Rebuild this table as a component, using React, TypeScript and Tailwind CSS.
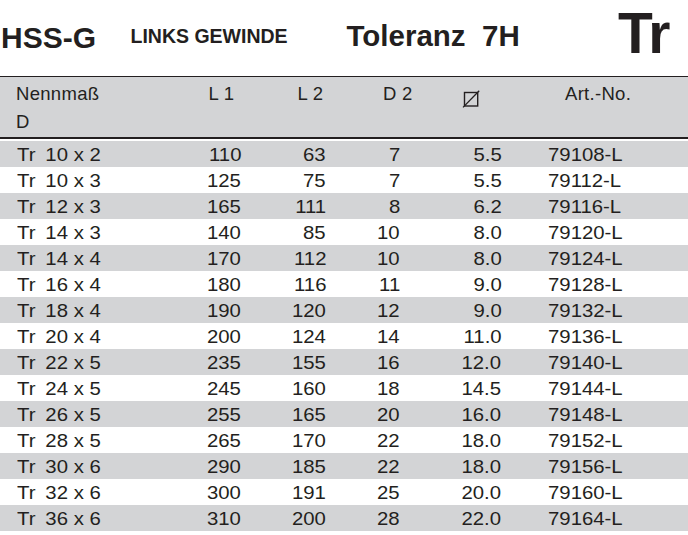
import React from "react";

const rows: [string, string, string, string, string, string][] = [
  ["10 x 2", "110", "63", "7", "5.5", "79108-L"],
  ["10 x 3", "125", "75", "7", "5.5", "79112-L"],
  ["12 x 3", "165", "111", "8", "6.2", "79116-L"],
  ["14 x 3", "140", "85", "10", "8.0", "79120-L"],
  ["14 x 4", "170", "112", "10", "8.0", "79124-L"],
  ["16 x 4", "180", "116", "11", "9.0", "79128-L"],
  ["18 x 4", "190", "120", "12", "9.0", "79132-L"],
  ["20 x 4", "200", "124", "14", "11.0", "79136-L"],
  ["22 x 5", "235", "155", "16", "12.0", "79140-L"],
  ["24 x 5", "245", "160", "18", "14.5", "79144-L"],
  ["26 x 5", "255", "165", "20", "16.0", "79148-L"],
  ["28 x 5", "265", "170", "22", "18.0", "79152-L"],
  ["30 x 6", "290", "185", "22", "18.0", "79156-L"],
  ["32 x 6", "300", "191", "25", "20.0", "79160-L"],
  ["36 x 6", "310", "200", "28", "22.0", "79164-L"],
];

function DiameterIcon() {
  return (
    <svg width="18" height="18" viewBox="0 0 18 18" className="mt-[13px]">
      <rect x="2.5" y="2.5" width="13.2" height="13.5" fill="none" stroke="#231f20" strokeWidth="1.4" />
      <line x1="1" y1="17.4" x2="17.2" y2="0.8" stroke="#231f20" strokeWidth="1.3" />
    </svg>
  );
}

function R({ children }: { children: React.ReactNode }) {
  return <span className="inline-block scale-x-[1.1] origin-right">{children}</span>;
}

export default function App() {
  return (
    <div className="w-[688px] h-[535px] bg-white overflow-hidden text-[#231f20] font-['Liberation_Sans',Arial,sans-serif]">
      {/* Title row */}
      <div className="flex h-[76px] font-bold">
        <div className="w-[130.5px] shrink-0 pl-[1px] pt-[22.6px] text-[30px] leading-none">HSS-G</div>
        <div className="w-[216px] shrink-0 pt-[26.8px] text-[19.5px] leading-none">LINKS GEWINDE</div>
        <div className="w-[271.5px] shrink-0 pt-[21px] text-[29.5px] leading-none whitespace-pre">Toleranz  7H</div>
        <div className="shrink-0 pt-[5px] text-[57px] leading-none tracking-[-1.5px]">Tr</div>
      </div>
      {/* Header */}
      <div className="border-t border-[#231f20] h-[63px] bg-[#d3d4d6] border-b-2 flex text-[18.5px] leading-[28px] tracking-[0.3px]">
        <div className="w-[208.5px] shrink-0 pl-[16px] pt-[3px]">
          <div>Nennmaß</div>
          <div>D</div>
        </div>
        <div className="w-[89px] shrink-0 pt-[3px]">L 1</div>
        <div className="w-[85.5px] shrink-0 pt-[3px]">L 2</div>
        <div className="w-[79px] shrink-0 pt-[3px]">D 2</div>
        <div className="w-[103px] shrink-0">
          <DiameterIcon />
        </div>
        <div className="shrink-0 pt-[3px]">Art.-No.</div>
      </div>
      {/* Body */}
      <div className="pt-[2px] text-[18.5px] leading-[28px]">
        {rows.map((r, i) => (
          <div key={i} className={`flex h-[26px] ${i % 2 === 0 ? "bg-[#d3d4d6]" : "bg-white"}`}>
            <div className="w-[190px] shrink-0 pl-[17px] whitespace-nowrap">
              <span className="inline-block scale-x-[1.1] origin-left">
                <span>Tr</span>
                <span className="ml-[9px]">{r[0]}</span>
              </span>
            </div>
            <div className="w-[51px] shrink-0 text-right"><R>{r[1]}</R></div>
            <div className="w-[85px] shrink-0 text-right"><R>{r[2]}</R></div>
            <div className="w-[74px] shrink-0 text-right"><R>{r[3]}</R></div>
            <div className="w-[101.5px] shrink-0 text-right"><R>{r[4]}</R></div>
            <div className="shrink-0 pl-[46px]">
              <span className="inline-block scale-x-[1.1] origin-left">{r[5]}</span>
            </div>
          </div>
        ))}
      </div>
    </div>
  );
}
